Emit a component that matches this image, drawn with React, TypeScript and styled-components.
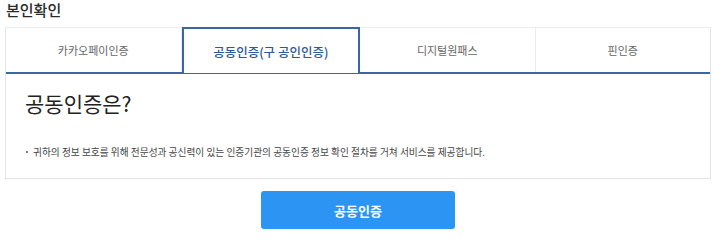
import React, { useState } from 'react';
import styled, { createGlobalStyle } from 'styled-components';

const GlobalStyle = createGlobalStyle`
  html, body {
    margin: 0;
    padding: 0;
    background: #fff;
  }
  body {
    font-family: 'Noto Sans CJK KR', 'Noto Sans', sans-serif;
    color: #222;
  }
`;

const Page = styled.div`
  width: 720px;
  padding: 0 9px 0 5px;
  box-sizing: border-box;
`;

const Title = styled.h2`
  margin: 0;
  padding: 0 0 0 1px;
  height: 27px;
  font-size: 15px;
  line-height: 20px;
  font-weight: 500;
  color: #2a2a2a;
`;

const Panel = styled.div`
  border: 1px solid #e4e4e4;
  border-top-color: #ececec;
`;

const TabList = styled.div`
  display: flex;
  border-bottom: 2px solid #3b65a3;
`;

const Tab = styled.button<{ $active?: boolean }>`
  flex: 1;
  height: 44px;
  margin: 0 0 ${p => (p.$active ? '-2px' : '0')};
  padding: 0;
  background: #fff;
  border: none;
  border-right: 1px solid #ececec;
  font-family: inherit;
  font-size: ${p => (p.$active ? '12.5px' : '11px')};
  font-weight: ${p => (p.$active ? 500 : 400)};
  color: ${p => (p.$active ? '#2d5a97' : '#666')};
  cursor: pointer;
  box-sizing: border-box;
  &:last-child {
    border-right: none;
  }
  ${p =>
    p.$active &&
    `
    height: 46px;
    margin-top: -1px;
    border: 2px solid #3b65a3;
    border-bottom: none;
  `}
`;

const Content = styled.div`
  padding: 14px 19px 19px;
`;

const Heading = styled.h3`
  margin: 0 0 27px;
  font-size: 21px;
  line-height: 30px;
  font-weight: 400;
  color: #222;
`;

const BulletList = styled.ul`
  margin: 0;
  padding: 0;
  list-style: none;
`;

const Bullet = styled.li`
  position: relative;
  padding-left: 8px;
  font-size: 9.7px;
  line-height: 14px;
  color: #444;
  &::before {
    content: '';
    position: absolute;
    left: 1px;
    top: 6px;
    width: 2px;
    height: 2px;
    border-radius: 50%;
    background: #555;
  }
`;

const ButtonRow = styled.div`
  display: flex;
  justify-content: center;
  padding-top: 12px;
`;

const PrimaryButton = styled.button`
  width: 194px;
  height: 38px;
  border: none;
  border-radius: 3px;
  background: #2c95f3;
  color: #fff;
  font-family: inherit;
  font-size: 13px;
  font-weight: 700;
  cursor: pointer;
`;

const tabs = ['카카오페이인증', '공동인증(구 공인인증)', '디지털원패스', '핀인증'];

export default function App() {
  const [active, setActive] = useState(1);

  return (
    <>
      <GlobalStyle />
      <Page>
        <Title>본인확인</Title>
        <Panel>
          <TabList>
            {tabs.map((t, i) => (
              <Tab key={t} $active={i === active} onClick={() => setActive(i)}>
                {t}
              </Tab>
            ))}
          </TabList>
          <Content>
            <Heading>공동인증은?</Heading>
            <BulletList>
              <Bullet>
                귀하의 정보 보호를 위해 전문성과 공신력이 있는 인증기관의 공동인증 정보 확인 절차를 거쳐 서비스를 제공합니다.
              </Bullet>
            </BulletList>
          </Content>
        </Panel>
        <ButtonRow>
          <PrimaryButton>공동인증</PrimaryButton>
        </ButtonRow>
      </Page>
    </>
  );
}
